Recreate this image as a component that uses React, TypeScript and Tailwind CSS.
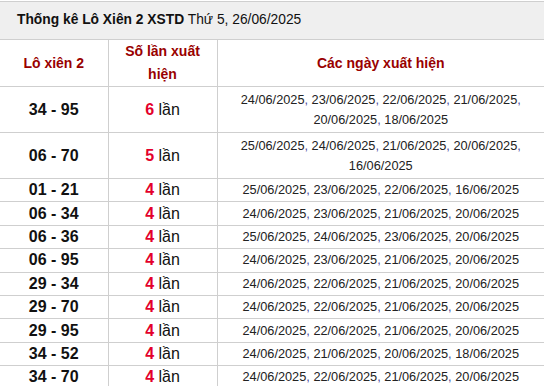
const rows: { pair: string; count: number; dates: string[]; tall?: boolean }[] = [
  { pair: '34 - 95', count: 6, dates: ['24/06/2025', '23/06/2025', '22/06/2025', '21/06/2025', '20/06/2025', '18/06/2025'], tall: true },
  { pair: '06 - 70', count: 5, dates: ['25/06/2025', '24/06/2025', '21/06/2025', '20/06/2025', '16/06/2025'], tall: true },
  { pair: '01 - 21', count: 4, dates: ['25/06/2025', '23/06/2025', '22/06/2025', '16/06/2025'] },
  { pair: '06 - 34', count: 4, dates: ['24/06/2025', '23/06/2025', '21/06/2025', '20/06/2025'] },
  { pair: '06 - 36', count: 4, dates: ['25/06/2025', '24/06/2025', '23/06/2025', '20/06/2025'] },
  { pair: '06 - 95', count: 4, dates: ['24/06/2025', '23/06/2025', '21/06/2025', '20/06/2025'] },
  { pair: '29 - 34', count: 4, dates: ['24/06/2025', '22/06/2025', '21/06/2025', '20/06/2025'] },
  { pair: '29 - 70', count: 4, dates: ['24/06/2025', '22/06/2025', '21/06/2025', '20/06/2025'] },
  { pair: '29 - 95', count: 4, dates: ['24/06/2025', '22/06/2025', '21/06/2025', '20/06/2025'] },
  { pair: '34 - 52', count: 4, dates: ['24/06/2025', '21/06/2025', '20/06/2025', '18/06/2025'] },
  { pair: '34 - 70', count: 4, dates: ['24/06/2025', '22/06/2025', '21/06/2025', '20/06/2025'] },
];

export default function App() {
  return (
    <div className="w-[544px] h-[386px] overflow-hidden bg-white pt-px font-['Liberation_Sans',Arial,sans-serif] text-[#111]">
      <table className="w-[544px] border-collapse table-fixed">
        <colgroup>
          <col className="w-[108px]" />
          <col className="w-[109px]" />
          <col />
        </colgroup>
        <thead>
          {/* Title */}
          <tr className="h-[38px]">
            <th colSpan={3} className="bg-[#efefef] border-y border-[#cfcfcf] text-left pl-[17px] text-[13.8px] font-normal">
              <span className="font-bold">Thống kê Lô Xiên 2 XSTD</span> Thứ 5, 26/06/2025
            </th>
          </tr>
          {/* Header */}
          <tr className="h-[47px] text-[14px] font-bold text-[#990000] leading-[23px]">
            <th className="border-y border-[#cfcfcf] px-2">Lô xiên 2</th>
            <th className="border border-[#cfcfcf] px-2">Số lần xuất hiện</th>
            <th className="border-y border-l border-[#cfcfcf] px-2">Các ngày xuất hiện</th>
          </tr>
        </thead>
        <tbody>
          {rows.map((r) => (
            <tr key={r.pair} className={r.tall ? 'h-[46px]' : 'h-[23.4px]'}>
              <td className="border-y border-[#cfcfcf] text-center text-[16px] font-bold leading-none">{r.pair}</td>
              <td className="border border-[#cfcfcf] text-center text-[16px] leading-none">
                <span className="font-bold text-[#e3002b]">{r.count}</span> lần
              </td>
              <td className="border-y border-l border-[#cfcfcf] text-center text-[12.75px] leading-[20px] px-2 text-[#222]">
                {r.dates.map((d, i) => (
                  <span key={d}>
                    {d}
                    {i < r.dates.length - 1 && <span className="text-[#4a4a9a]">, </span>}
                  </span>
                ))}
              </td>
            </tr>
          ))}
        </tbody>
      </table>
    </div>
  );
}
